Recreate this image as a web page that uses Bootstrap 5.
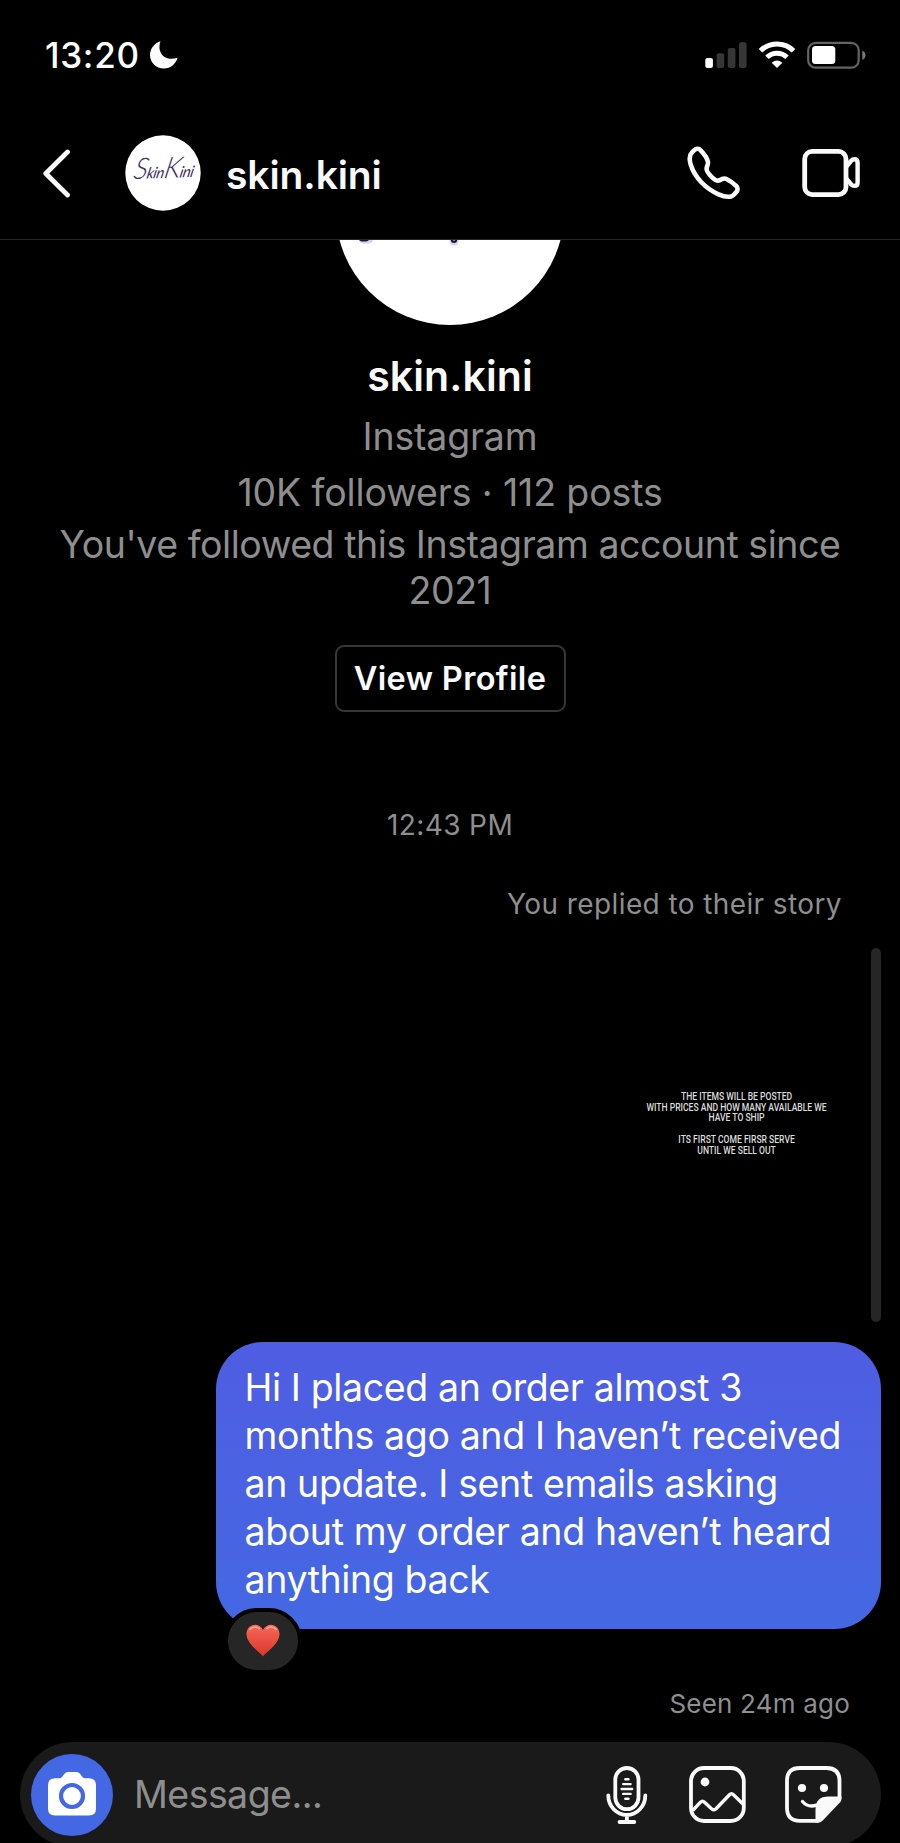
<!DOCTYPE html>
<html lang="en" data-bs-theme="dark">
<head>
<meta charset="utf-8">
<meta name="viewport" content="width=device-width, initial-scale=1">
<title>skin.kini</title>
<link href="https://cdn.jsdelivr.net/npm/bootstrap@5.3.0/dist/css/bootstrap.min.css" rel="stylesheet">
<style>
  body { background: #000; color: #fafafa; font-family: Inter, "Liberation Sans", sans-serif; font-size: 37.5px; line-height: 46px; letter-spacing: -.45px; }
  svg { display: block; flex: none; }
  .phone { width: 900px; height: 1843px; }
  .statusbar { height: 110px; padding: 0 34px 0 45px; }
  .clock { font-size: 35px; font-weight: 500; line-height: 42px; letter-spacing: .7px; color: #fff; }
  .moon { margin-left: 9px; }
  .topbar { height: 130px; padding: 0 39px 4px 41px; border-bottom: 1px solid #262626; }
  .topbar-avatar { margin-left: 54px; }
  .handle { font-size: 39px; font-weight: 600; line-height: 48px; letter-spacing: -.1px; margin-left: 25px; padding-top: 4px; }
  .calls { gap: 61px; }
  .muted { color: #8e8e8e; }
  .profile-name { font-size: 41px; font-weight: 600; line-height: 50px; letter-spacing: .1px; margin-top: 26px; color: #fafafa; }
  .service { margin-top: 13px; letter-spacing: -.2px; }
  .stats { margin-top: 10px; letter-spacing: -.13px; }
  .since { margin-top: 6px; padding: 0 50px; }
  .btn-profile { --bs-btn-color: #fafafa; --bs-btn-border-color: #363636; --bs-btn-border-width: 2px; --bs-btn-border-radius: 9px; --bs-btn-padding-x: 0; --bs-btn-padding-y: 0; --bs-btn-font-size: 32.5px; --bs-btn-font-weight: 600; letter-spacing: .35px; width: 231px; height: 67px; margin-top: 31px; padding-top: 1px; }
  .stamp { font-size: 28px; line-height: 34px; letter-spacing: .4px; }
  .time-mark { margin-top: 96px; }
  .reply-note { margin-top: 45px; padding-right: 58px; }
  .story { height: 374px; margin: 27px 19px 0 0; }
  .story-card { width: 208px; margin-right: 30px; padding-bottom: 22px; font: 500 10.5px/10.75px Roboto, "Liberation Sans", sans-serif; letter-spacing: 0; color: #dcdcdc; }
  .story-copy { transform: scaleX(.815); }
  .story-rule { width: 10px; background: #262626; }
  .bubble { width: 665px; height: 287.5px; margin: 19.5px 19px 0 0; padding: 22.5px 20px 0 28.5px; border-radius: 47px; background: linear-gradient(#4f5de2, #4468e3); line-height: 48px; letter-spacing: -.38px; color: #fff; }
  .reaction { left: 8px; top: 266px; width: 78px; height: 66px; border: 4px solid #000; background: #262626; border-radius: 33px; }
  .seen { font-size: 26px; line-height: 32px; letter-spacing: .2px; margin-top: 58.5px; padding-right: 50px; }
  .composer { width: 861px; height: 105px; margin: 22.5px 0 0 20px; padding: 0 39px 0 11px; border-radius: 53px; background: #1a1a1a; }
  .camera { width: 82px; height: 82px; background: #4468e3; }
  .placeholder-text { margin-left: 21px; letter-spacing: -.55px; }
  .tools { gap: 39px; }
  .mic { margin-right: 2px; }
</style>
</head>
<body>
<div class="phone overflow-hidden d-flex flex-column">

  <div class="statusbar d-flex align-items-center justify-content-between flex-shrink-0">
    <div class="d-flex align-items-center">
      <span class="clock">13:20</span>
      <svg class="moon" width="30" height="30" viewBox="0 0 30 30"><path fill="#fff" d="M11.5 1.2C9 8 11 14.500 16.500 17.500c4 2 8 1.500 12 .3C27 24 21.500 28.500 15 28.500 7 28.500 1 22.500 1 15 1 8.500 5.500 3 11.500 1.200Z"/></svg>
    </div>
    <svg width="162" height="30" viewBox="0 0 162 30">
      <rect x="1.300" y="18" width="7.600" height="10" rx="2" fill="#fff"/>
      <g fill="#363636"><rect x="12.600" y="13.300" width="7.600" height="14.700" rx="2"/><rect x="23.800" y="8" width="7.600" height="20" rx="2"/><rect x="35" y="2.300" width="7.600" height="25.700" rx="2"/></g>
      <g fill="none" stroke="#fff" stroke-width="5"><path d="M56.500 10.700a23.500 23.500 0 0 1 33 0"/><path d="M63 17.300a14.300 14.300 0 0 1 20 0"/></g>
      <path fill="#fff" d="M73 28l-5.300-5.300q5.300-4.200 10.600 0Z"/>
      <rect x="104.200" y="2.900" width="50.500" height="24.800" rx="7.500" fill="none" stroke="#636363" stroke-width="2.200"/>
      <rect x="108" y="6" width="23.300" height="18" rx="3.500" fill="#fff"/>
      <path fill="#7a7a7a" d="M158.300 10.500q3.200 1.700 3.200 4.800t-3.200 4.800Z"/>
    </svg>
  </div>

  <header class="topbar d-flex align-items-center flex-shrink-0">
    <svg width="30" height="50" viewBox="0 0 30 50"><path d="M26.500 4 4.800 25.500 26.500 47" fill="none" stroke="#fafafa" stroke-width="4.800" stroke-linecap="round" stroke-linejoin="round"/></svg>
    <svg class="topbar-avatar" width="76" height="76" viewBox="0 0 76 76">
      <circle cx="38" cy="38" r="37.700" fill="#fff"/>
      <text transform="translate(7.500 44) rotate(-2) skewX(-14)" font-family="Lato, sans-serif" font-style="italic" font-size="15.500" fill="#40315f" textLength="60" lengthAdjust="spacingAndGlyphs"><tspan font-size="29" font-weight="300">S</tspan>kin<tspan font-size="29" font-weight="300">K</tspan>ini</text>
    </svg>
    <span class="handle">skin.kini</span>
    <div class="calls d-flex ms-auto">
      <svg width="55" height="55" viewBox="0 0 55 55"><path fill="none" stroke="#fafafa" stroke-width="4.600" stroke-linejoin="round" d="M14.700 5.300C12.800 3.200 10.300 3.200 8.300 5.100L5.800 7.700C2.800 10.800 3.500 16 5 20.500 9 32.500 19.500 43.500 32.500 49.300 37 51.300 41.500 52.200 45 51.500q1.500-.4 2.500-1.500l2.600-2.700c2-2 2-4.700 0-6.500-3-3-6.500-5.200-9.700-6.800-2.600-1.300-5 .1-7.300 1.500-3.500 1.500-12.300-7.500-12.500-11.500-.1-2.500 1.700-4.500 1.400-6.800C21.500 14 17.500 8.200 14.700 5.300Z"/></svg>
      <svg width="59" height="55" viewBox="0 -2.500 59 55" fill="none" stroke="#fafafa" stroke-width="4.800" stroke-linejoin="round"><rect x="2.700" y="3.900" width="41.300" height="43.200" rx="7.500"/><path d="M44 19.500l5-6q1.500-1.700 3.500-1.700 3.100 0 3.100 3.500v19.600q0 3.500-3.100 3.500-2 0-3.500-1.700l-5-6" stroke-width="4.400"/></svg>
    </div>
  </header>

  <main class="d-flex flex-column flex-shrink-0">
    <section class="muted text-center d-flex flex-column align-items-center">
      <svg width="230" height="85" viewBox="0 0 230 85">
        <circle cx="115" cy="-29.300" r="114.300" fill="#fff"/>
        <ellipse cx="31" cy="0" rx="7" ry="3.800" fill="#d9d2f3"/><ellipse cx="29" cy="-1" rx="5" ry="2.500" fill="#1c1430"/>
        <circle cx="119" cy="1" r="4.500" fill="#d9d2f3"/><circle cx="119" cy="-.3" r="3.200" fill="#1c1430"/><circle cx="119" cy="0" r="1" fill="#b9b2d3"/>
      </svg>
      <div class="profile-name">skin.kini</div>
      <div class="service">Instagram</div>
      <div class="stats">10K followers · 112 posts</div>
      <div class="since">You've followed this Instagram account since 2021</div>
      <a class="btn btn-profile d-flex align-items-center justify-content-center">View Profile</a>
      <div class="stamp time-mark">12:43 PM</div>
    </section>

    <div class="stamp reply-note muted text-end">You replied to their story</div>

    <div class="story d-flex justify-content-end">
      <div class="story-card d-flex align-items-center justify-content-center text-center text-nowrap">
        <div class="story-copy">THE ITEMS WILL BE POSTED<br>WITH PRICES AND HOW MANY AVAILABLE WE<br>HAVE TO SHIP<br><br>ITS FIRST COME FIRSR SERVE<br>UNTIL WE SELL OUT</div>
      </div>
      <div class="story-rule rounded-pill"></div>
    </div>

    <div class="bubble position-relative align-self-end text-nowrap">
      Hi I placed an order almost 3<br>months ago and I haven’t received<br>an update. I sent emails asking<br>about my order and haven’t heard<br>anything back
      <span class="reaction position-absolute d-flex align-items-center justify-content-center">
        <svg width="34" height="33" viewBox="0 0 34 33">
          <defs><linearGradient id="heart" x1="0" y1="0" x2="0" y2="1"><stop offset="0" stop-color="#f4695c"/><stop offset=".35" stop-color="#ee5546"/><stop offset="1" stop-color="#d9382c"/></linearGradient></defs>
          <path fill="url(#heart)" d="M17 32.500C15 29 1 20.500.5 10.500.3 4.500 4.500.8 9 .8c3.500 0 6.500 2 8 5.200C18.500 2.800 21.500.8 25 .8c4.500 0 8.700 3.700 8.500 9.700C33 20.500 19 29 17 32.500Z"/>
          <path fill="none" stroke="#fbb0a5" stroke-width="1.800" stroke-linecap="round" opacity=".8" d="M4 5.300q4.500-4.500 9.300-.8M21 4.500q4.500-3.700 9 .8"/>
        </svg>
      </span>
    </div>

    <div class="seen muted text-end">Seen 24m ago</div>

    <div class="composer d-flex align-items-center">
      <div class="camera rounded-circle d-flex align-items-center justify-content-center">
        <svg width="48" height="46" viewBox="0 0 48 46"><path fill="#fff" d="M7 6.300h4.500q1.500 0 2.700-1.500l2.300-3Q17.800 0 20 0h8.500q2.200 0 3.500 1.800l2.300 3q1.200 1.500 2.700 1.500H41q7 0 7 7V36.500q0 7-7 7H7q-7 0-7-7V13.300q0-7 7-7Z"/><circle cx="24" cy="24" r="11" fill="#fff" stroke="#4468e3" stroke-width="4.200"/></svg>
      </div>
      <span class="placeholder-text muted">Message...</span>
      <div class="tools d-flex align-items-center ms-auto">
        <svg class="mic" width="42" height="58" viewBox="0 0 42 58" fill="none" stroke="#fafafa" stroke-width="3.800" stroke-linecap="round"><rect x="9.300" y="2" width="23.200" height="41.200" rx="11.600"/><path d="M2.300 29.500a18.500 19.500 0 0 0 37 0M20.900 49v7M13.500 56h14.800"/><path stroke-width="2.400" d="M19.300 13.300h3.200M17.200 18.100h7.400M15.600 23h10.600M17.200 27.900h7.400M19.300 32.700h3.200"/></svg>
        <svg width="57" height="57" viewBox="0 0 57 57" fill="none" stroke="#fafafa" stroke-width="3.800" stroke-linejoin="round"><rect x="2" y="2" width="52.800" height="53" rx="13"/><circle cx="16" cy="16" r="4.400" fill="#fafafa" stroke="none"/><path stroke-width="3.400" d="M3.700 44.500l7.800-8.300q2-2 4 0l7.300 6.800q2 1.700 4 0L40.500 28.700q2-2 4 0L54 38"/></svg>
        <svg width="57" height="57" viewBox="0 0 57 57"><path fill="none" stroke="#fafafa" stroke-width="3.800" stroke-linejoin="round" stroke-linecap="round" d="M32.500 54.800H15q-13 0-13-13V15Q2 2 15 2H41.500q13 0 13 13V32.500"/><path fill="#fafafa" d="M56.400 30.500V33q0 2-1.500 3.500L37.500 54.800q-2 1.900-4.500 1.900h-2.500V43.500q0-13 13-13Z"/><circle cx="17" cy="22" r="4.100" fill="#fafafa"/><circle cx="39" cy="22" r="4.100" fill="#fafafa"/><path fill="none" stroke="#fafafa" stroke-width="3.400" stroke-linecap="round" d="M17.500 35.500q5.500 6.500 14 3.700"/></svg>
      </div>
    </div>
  </main>
</div>
<script src="https://cdn.jsdelivr.net/npm/bootstrap@5.3.0/dist/js/bootstrap.bundle.min.js"></script>
</body>
</html>
